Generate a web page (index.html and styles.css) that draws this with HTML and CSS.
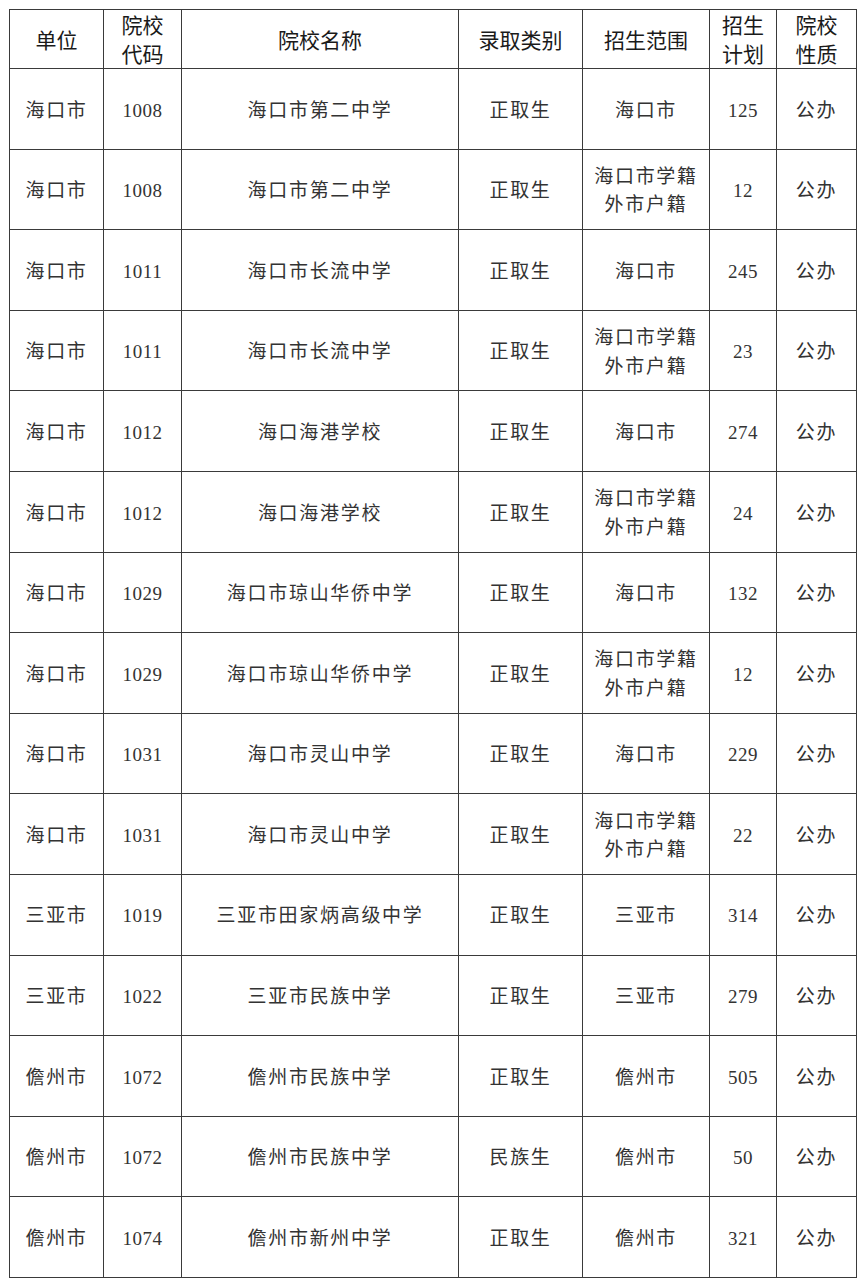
FILE: index.html
```html
<!DOCTYPE html>
<html lang="zh">
<head>
<meta charset="utf-8">
<link rel="stylesheet" href="styles.css">
</head>
<body>
<table class="plan">
<colgroup>
<col class="c1"><col class="c2"><col class="c3"><col class="c4"><col class="c5"><col class="c6"><col class="c7">
</colgroup>
<thead>
<tr><th>单位</th><th>院校<br>代码</th><th>院校名称</th><th>录取类别</th><th>招生范围</th><th>招生<br>计划</th><th>院校<br>性质</th></tr>
</thead>
<tbody>
<tr><td>海口市</td><td class="num">1008</td><td>海口市第二中学</td><td>正取生</td><td>海口市</td><td class="num">125</td><td>公办</td></tr>
<tr><td>海口市</td><td class="num">1008</td><td>海口市第二中学</td><td>正取生</td><td>海口市学籍<br>外市户籍</td><td class="num">12</td><td>公办</td></tr>
<tr><td>海口市</td><td class="num">1011</td><td>海口市长流中学</td><td>正取生</td><td>海口市</td><td class="num">245</td><td>公办</td></tr>
<tr><td>海口市</td><td class="num">1011</td><td>海口市长流中学</td><td>正取生</td><td>海口市学籍<br>外市户籍</td><td class="num">23</td><td>公办</td></tr>
<tr><td>海口市</td><td class="num">1012</td><td>海口海港学校</td><td>正取生</td><td>海口市</td><td class="num">274</td><td>公办</td></tr>
<tr><td>海口市</td><td class="num">1012</td><td>海口海港学校</td><td>正取生</td><td>海口市学籍<br>外市户籍</td><td class="num">24</td><td>公办</td></tr>
<tr><td>海口市</td><td class="num">1029</td><td>海口市琼山华侨中学</td><td>正取生</td><td>海口市</td><td class="num">132</td><td>公办</td></tr>
<tr><td>海口市</td><td class="num">1029</td><td>海口市琼山华侨中学</td><td>正取生</td><td>海口市学籍<br>外市户籍</td><td class="num">12</td><td>公办</td></tr>
<tr><td>海口市</td><td class="num">1031</td><td>海口市灵山中学</td><td>正取生</td><td>海口市</td><td class="num">229</td><td>公办</td></tr>
<tr><td>海口市</td><td class="num">1031</td><td>海口市灵山中学</td><td>正取生</td><td>海口市学籍<br>外市户籍</td><td class="num">22</td><td>公办</td></tr>
<tr><td>三亚市</td><td class="num">1019</td><td>三亚市田家炳高级中学</td><td>正取生</td><td>三亚市</td><td class="num">314</td><td>公办</td></tr>
<tr><td>三亚市</td><td class="num">1022</td><td>三亚市民族中学</td><td>正取生</td><td>三亚市</td><td class="num">279</td><td>公办</td></tr>
<tr><td>儋州市</td><td class="num">1072</td><td>儋州市民族中学</td><td>正取生</td><td>儋州市</td><td class="num">505</td><td>公办</td></tr>
<tr><td>儋州市</td><td class="num">1072</td><td>儋州市民族中学</td><td>民族生</td><td>儋州市</td><td class="num">50</td><td>公办</td></tr>
<tr><td>儋州市</td><td class="num">1074</td><td>儋州市新州中学</td><td>正取生</td><td>儋州市</td><td class="num">321</td><td>公办</td></tr>
</tbody>
</table>
</body>
</html>
```
FILE: styles.css
```css
html, body {
  margin: 0;
  padding: 0;
  background: #ffffff;
}
body {
  padding: 9px 0 0 9px;
}
.plan {
  border-collapse: collapse;
  table-layout: fixed;
  width: 847px;
}
.c1 { width: 94px; }
.c2 { width: 78px; }
.c3 { width: 277px; }
.c4 { width: 124px; }
.c5 { width: 127px; }
.c6 { width: 67px; }
.c7 { width: 80px; }
.plan th, .plan td {
  border: 1.5px solid #3a3a3a;
  text-align: center;
  vertical-align: middle;
  padding: 0;
}
.plan th {
  height: 57px;
  font-family: "Noto Sans CJK SC", sans-serif;
  font-weight: 400;
  font-size: 21px;
  line-height: 29px;
  color: #1a1a1a;
}
.plan td {
  height: 75.6px;
  padding-top: 4px;
  font-family: "Liberation Serif", "Noto Sans CJK SC", serif;
  font-weight: 400;
  font-size: 19px;
  line-height: 28.5px;
  letter-spacing: 1.7px;
  color: #333333;
}
.plan td.num {
  font-size: 19px;
  letter-spacing: 0.5px;
}
```
